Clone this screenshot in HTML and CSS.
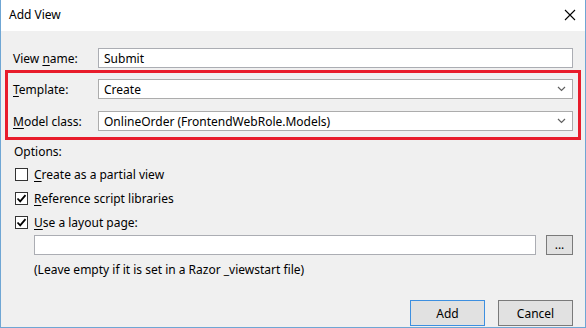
FILE: index.html
```html
<!DOCTYPE html>
<html lang="en">

<head>
    <meta charset="UTF-8">
    <title>Add View</title>
    <link rel="stylesheet" href="styles.css">
</head>

<body>
    <div class="window">
        <div class="titlebar">
            <span class="title">Add View</span>
            <svg class="close" width="12" height="12" viewBox="0 0 12 12">
                <path d="M1 1 L11 11 M11 1 L1 11" stroke="#000" stroke-width="1.1" fill="none"/>
            </svg>
        </div>
        <div class="content">
            <div class="row first">
                <label class="field-label">View <u>n</u>ame:</label>
                <div class="textbox">Submit</div>
            </div>
            <div class="highlight">
                <div class="row">
                    <label class="field-label"><u>T</u>emplate:</label>
                    <div class="combo">
                        <span>Create</span>
                        <svg class="chevron" width="9" height="6" viewBox="0 0 9 6">
                            <path d="M1 1 L4.5 4.5 L8 1" stroke="#606060" stroke-width="1.2" fill="none"/>
                        </svg>
                    </div>
                </div>
                <div class="row second">
                    <label class="field-label"><u>M</u>odel class:</label>
                    <div class="combo">
                        <span>OnlineOrder (FrontendWebRole.Models)</span>
                        <svg class="chevron" width="9" height="6" viewBox="0 0 9 6">
                            <path d="M1 1 L4.5 4.5 L8 1" stroke="#606060" stroke-width="1.2" fill="none"/>
                        </svg>
                    </div>
                </div>
            </div>
            <div class="options">Options:</div>
            <div class="check-row">
                <span class="checkbox"></span>
                <span><u>C</u>reate as a partial view</span>
            </div>
            <div class="check-row">
                <span class="checkbox">
                    <svg width="11" height="11" viewBox="0 0 11 11">
                        <path d="M1.5 5.5 L4.2 8.3 L9.5 2.2" stroke="#000" stroke-width="1.8" fill="none"/>
                    </svg>
                </span>
                <span><u>R</u>eference script libraries</span>
            </div>
            <div class="check-row">
                <span class="checkbox">
                    <svg width="11" height="11" viewBox="0 0 11 11">
                        <path d="M1.5 5.5 L4.2 8.3 L9.5 2.2" stroke="#000" stroke-width="1.8" fill="none"/>
                    </svg>
                </span>
                <span><u>U</u>se a layout page:</span>
            </div>
            <div class="layout-row">
                <div class="textbox"></div>
                <button class="btn browse">...</button>
            </div>
            <div class="note">(Leave empty if it is set in a Razor _viewstart file)</div>
            <div class="buttons">
                <button class="btn default">Add</button>
                <button class="btn">Cancel</button>
            </div>
        </div>
    </div>
</body>

</html>
```

FILE: styles.css
```css
* {
    box-sizing: border-box;
}

body {
    margin: 0;
    font-family: 'Noto Sans', 'Open Sans', sans-serif;
    font-size: 12px;
    color: #000;
}

.window {
    width: 586px;
    height: 328px;
    border: 1px solid #6fa6d4;
    border-top: none;
    background-color: #f0f0f0;
    display: flex;
    flex-direction: column;
}

.titlebar {
    height: 31px;
    background-color: #fff;
    display: flex;
    align-items: center;
    justify-content: space-between;
    padding: 0 9px 2px 8px;
}

.title {
    font-size: 12px;
}

.content {
    padding: 0 4px;
    display: flex;
    flex-direction: column;
}

u {
    text-decoration-thickness: 1px;
    text-underline-offset: 2px;
}

.row {
    display: flex;
    align-items: center;
    height: 20px;
}

.row.first {
    margin-top: 17px;
    padding: 0 8px;
}

.field-label {
    width: 85px;
}

.textbox,
.combo {
    flex: 1;
    height: 20px;
    background-color: #fff;
    border: 1px solid #abadb3;
    padding: 0 5px;
    display: flex;
    align-items: center;
}

.combo {
    justify-content: space-between;
    border-color: #acacac;
    padding-right: 6px;
}

.highlight {
    margin-top: 2px;
    border: 3px solid #e81c2b;
    padding: 6px 5px;
}

.highlight .row.second {
    margin-top: 12px;
}

.options {
    margin: 3px 0 0 9px;
    height: 16px;
}

.check-row {
    display: flex;
    align-items: center;
    gap: 6px;
    margin: 8px 0 0 10px;
    height: 14px;
}

.check-row + .check-row {
    margin-top: 10px;
}

.checkbox {
    width: 13px;
    height: 13px;
    border: 1px solid #333;
    background-color: #fff;
    display: flex;
    align-items: center;
    justify-content: center;
}

.layout-row {
    display: flex;
    align-items: center;
    gap: 10px;
    margin: 6px 8px 0 29px;
    height: 20px;
}

.note {
    margin: 6px 0 0 29px;
}

.btn {
    font-family: inherit;
    font-size: 12px;
    color: #000;
    background-color: #e1e1e1;
    border: 1px solid #7a7a7a;
    padding: 0;
}

.browse {
    width: 27px;
    height: 20px;
    line-height: 10px;
}

.buttons {
    display: flex;
    justify-content: flex-end;
    gap: 13px;
    margin: 22px 8px 0 0;
}

.buttons .btn {
    width: 75px;
    height: 26px;
}

.buttons .default {
    border-color: #3d8fe0;
}
```
